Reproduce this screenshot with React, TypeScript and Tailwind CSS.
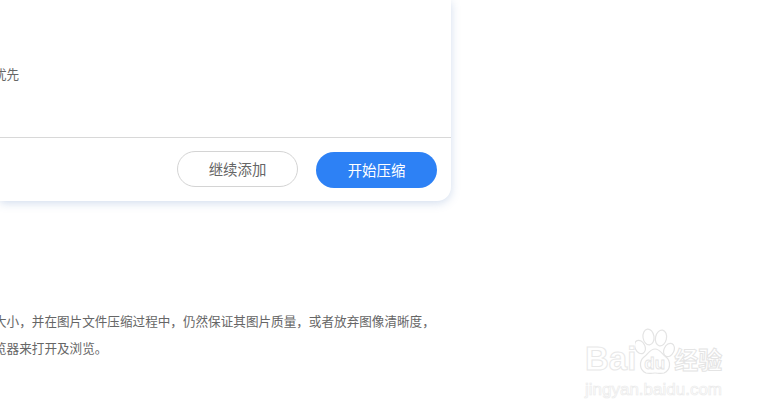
import React from 'react';

const cjk = "font-['Noto_Sans_CJK_SC','Liberation_Sans',sans-serif]";

const Watermark: React.FC = () => (
  <div className="absolute left-[585px] top-[328px] w-[140px] h-[70px] select-none">
    <div className="flex items-end h-[50px]">
      <span className="font-['Liberation_Sans',sans-serif] font-bold text-[33px] leading-[38px] text-white [-webkit-text-stroke:1px_#e8e8e8]">Bai</span>
      <div className="relative -ml-px shrink-0 w-[40px] h-[50px]">
        <svg width="40" height="50" viewBox="0 0 40 50" fill="#fff" stroke="#e4e4e4" strokeWidth="1.2">
          <ellipse cx="5" cy="19" rx="5" ry="7" transform="rotate(-25 5 19)" />
          <ellipse cx="13.5" cy="9" rx="5.5" ry="8" transform="rotate(-8 13.5 9)" />
          <ellipse cx="26" cy="10" rx="5.5" ry="8" transform="rotate(12 26 10)" />
          <ellipse cx="34" cy="22" rx="5" ry="7" transform="rotate(25 34 22)" />
          <path d="M20 21c5 0 7 5 11 8 5 4 5 13-2 16-4 1-6 0-9 0s-5 1-9 0c-7-3-7-12-2-16 4-3 6-8 11-8z" />
        </svg>
        <span className="absolute left-[9px] top-[27px] font-['Liberation_Sans',sans-serif] font-bold text-[17px] leading-[18px] text-white [-webkit-text-stroke:0.8px_#e4e4e4]">du</span>
      </div>
      <span className={`${cjk} font-bold text-[24px] leading-[39px] -ml-px text-white [-webkit-text-stroke:1px_#e4e4e4] whitespace-nowrap`}>经验</span>
    </div>
    <p className="mt-[3px] font-['Liberation_Sans',sans-serif] text-[17px] leading-[18px] text-white [-webkit-text-stroke:0.7px_#ebebeb] whitespace-nowrap">jingyan.baidu.com</p>
  </div>
);

const App: React.FC = () => {
  return (
    <div className={`relative w-[764px] h-[411px] overflow-hidden bg-white ${cjk}`}>
      <div className="w-[451px] h-[201px] flex flex-col bg-white rounded-br-[14px] shadow-[0_2px_10px_rgba(90,130,190,0.28)]">
        <div className="h-[137px] pt-[65px] flex">
          <span className="-ml-[6px] text-[12.6px] leading-[18px] text-[#666]">优先</span>
        </div>
        <div className="flex-1 border-t border-[#d8d8d8] flex items-center justify-end gap-[18px] pr-[14px]">
          <button className="w-[121px] h-[36px] mb-[1px] rounded-full border border-[#d4d4d4] bg-white text-[14.4px] text-[#666]">继续添加</button>
          <button className="w-[121px] h-[36px] mt-[1px] rounded-full bg-[#2d81f5] text-[14.4px] text-white">开始压缩</button>
        </div>
      </div>

      <div className="mt-[106px] -ml-[6px] w-[460px] text-[12.6px] leading-[27px] text-[#666] whitespace-nowrap">
        <p>大小，并在图片文件压缩过程中，仍然保证其图片质量，或者放弃图像清晰度，</p>
        <p>览器来打开及浏览。</p>
      </div>

      <Watermark />
    </div>
  );
};

export default App;
